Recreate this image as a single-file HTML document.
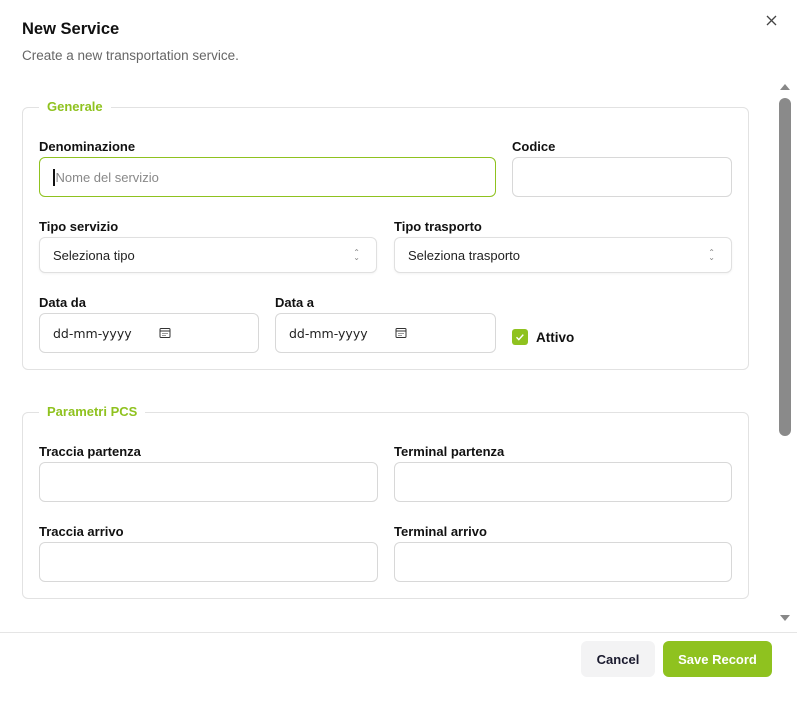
<!DOCTYPE html>
<html><head><style>
*{box-sizing:border-box;margin:0;padding:0}
body{width:797px;height:702px;background:#fff;font-family:"Liberation Sans",sans-serif;position:relative;overflow:hidden;color:#111}
.a{position:absolute}
h1{position:absolute;left:22px;top:20px;font-size:16.5px;font-weight:bold;color:#111}
.sub{left:22px;top:48px;font-size:13.5px;color:#666}
.fs{border:1px solid #e2e2e2;border-radius:6px}
.lg{background:#fff;padding:0 8px;color:#8fc21f;font-weight:bold;font-size:13px}
.lb{font-size:13px;font-weight:bold;color:#111}
.in{border:1px solid #d8d8d8;border-radius:6px;background:#fff;font-size:13px;color:#222;padding-left:13px;display:flex;align-items:center}
.sel{box-shadow:0 1px 2px rgba(0,0,0,.05);border-color:#e0e0e0}
.chev{position:absolute;right:16px;top:50%;transform:translateY(-50%);font-size:8px;color:#888;line-height:5px;text-align:center}
</style></head><body>
<h1>New Service</h1>
<div class="a sub">Create a new transportation service.</div>
<svg class="a" style="left:766px;top:15px" width="11" height="11" viewBox="0 0 11 11"><path d="M1 1L10 10M10 1L1 10" stroke="#444" stroke-width="1.3"/></svg>

<div class="a fs" style="left:22px;top:107px;width:727px;height:263px"></div>
<div class="a lg" style="left:39px;top:99px">Generale</div>
<div class="a lb" style="left:39px;top:139px">Denominazione</div>
<div class="a in" style="left:39px;top:157px;width:457px;height:40px;border-color:#8fc21f;color:#888"><span style="display:inline-block;width:1.5px;height:17px;background:#111;margin-right:1px"></span>Nome del servizio</div>
<div class="a lb" style="left:512px;top:139px">Codice</div>
<div class="a in" style="left:512px;top:157px;width:220px;height:40px"></div>

<div class="a lb" style="left:39px;top:219px">Tipo servizio</div>
<div class="a in sel" style="left:39px;top:237px;width:338px;height:36px">Seleziona tipo<div class="chev">⌃<br>⌄</div></div>
<div class="a lb" style="left:394px;top:219px">Tipo trasporto</div>
<div class="a in sel" style="left:394px;top:237px;width:338px;height:36px">Seleziona trasporto<div class="chev">⌃<br>⌄</div></div>

<div class="a lb" style="left:39px;top:295px">Data da</div>
<div class="a in" style="left:39px;top:313px;width:220px;height:40px;font-family:'DejaVu Sans',sans-serif;font-size:12.5px">dd-mm-yyyy
<svg style="margin-left:27px" width="12" height="12" viewBox="0 0 12 12"><rect x="1" y="1.5" width="10" height="9" rx="1" fill="none" stroke="#333"/><path d="M1 4h10" stroke="#333"/><path d="M3.5 6.5h1M5.5 6.5h1M7.5 6.5h1M3.5 8.5h1M5.5 8.5h1" stroke="#333"/></svg></div>
<div class="a lb" style="left:275px;top:295px">Data a</div>
<div class="a in" style="left:275px;top:313px;width:221px;height:40px;font-family:'DejaVu Sans',sans-serif;font-size:12.5px">dd-mm-yyyy
<svg style="margin-left:27px" width="12" height="12" viewBox="0 0 12 12"><rect x="1" y="1.5" width="10" height="9" rx="1" fill="none" stroke="#333"/><path d="M1 4h10" stroke="#333"/><path d="M3.5 6.5h1M5.5 6.5h1M7.5 6.5h1M3.5 8.5h1M5.5 8.5h1" stroke="#333"/></svg></div>
<div class="a" style="left:512px;top:329px;width:16px;height:16px;border-radius:3px;background:#8fc21f"><svg width="16" height="16"><path d="M4.5 8.3l2.3 2.3 4.5-5" stroke="#fff" stroke-width="1.4" fill="none"/></svg></div>
<div class="a lb" style="left:536px;top:330px;font-size:13.5px">Attivo</div>

<div class="a fs" style="left:22px;top:412px;width:727px;height:187px"></div>
<div class="a lg" style="left:39px;top:404px">Parametri PCS</div>
<div class="a lb" style="left:39px;top:444px">Traccia partenza</div>
<div class="a in" style="left:39px;top:462px;width:339px;height:40px"></div>
<div class="a lb" style="left:394px;top:444px">Terminal partenza</div>
<div class="a in" style="left:394px;top:462px;width:338px;height:40px"></div>
<div class="a lb" style="left:39px;top:524px">Traccia arrivo</div>
<div class="a in" style="left:39px;top:542px;width:339px;height:40px"></div>
<div class="a lb" style="left:394px;top:524px">Terminal arrivo</div>
<div class="a in" style="left:394px;top:542px;width:338px;height:40px"></div>

<svg class="a" style="left:778px;top:82px" width="14" height="10"><path d="M2 8L7 2L12 8Z" fill="#888"/></svg>
<div class="a" style="left:779px;top:98px;width:12px;height:338px;border-radius:6px;background:#8a8a8a"></div>
<svg class="a" style="left:778px;top:613px" width="14" height="10"><path d="M2 2L7 8L12 2Z" fill="#888"/></svg>

<div class="a" style="left:0;top:632px;width:797px;height:1px;background:#e5e5e5"></div>
<div class="a" style="left:581px;top:641px;width:74px;height:36px;border-radius:6px;background:#f3f3f4;font-size:13px;font-weight:bold;color:#1a1a2e;display:flex;align-items:center;justify-content:center">Cancel</div>
<div class="a" style="left:663px;top:641px;width:109px;height:36px;border-radius:6px;background:#8fc21f;font-size:13px;font-weight:bold;color:#fff;display:flex;align-items:center;justify-content:center">Save Record</div>
</body></html>
